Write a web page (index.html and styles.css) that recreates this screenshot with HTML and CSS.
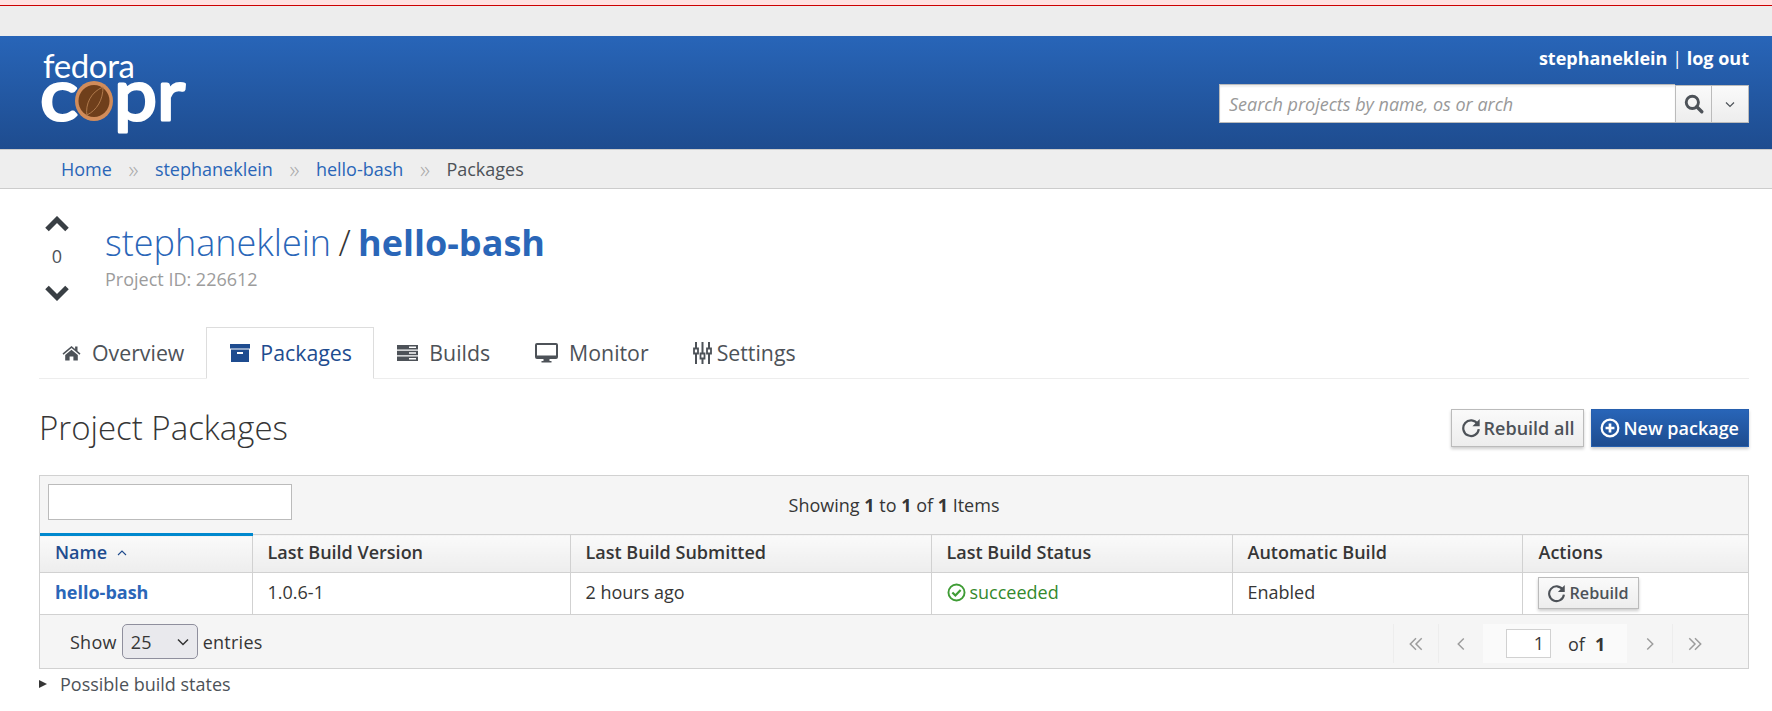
FILE: index.html
```html
<!DOCTYPE html>
<html lang="en">
<head>
<meta charset="utf-8">
<title>Project Packages</title>
<link rel="stylesheet" href="styles.css">
</head>
<body>
<div class="alert-strip"></div>
<div class="top-gap"></div>
<header class="masthead">
  <svg class="logo" viewBox="0 0 150 92" width="150" height="92">
    <text class="logo-fedora" x="3" y="27" textLength="92">fedora</text>
    <text class="logo-copr" x="0" y="69" textLength="38" lengthAdjust="spacingAndGlyphs">c</text>
    <text class="logo-copr" x="74" y="69" textLength="71" lengthAdjust="spacingAndGlyphs">pr</text>
    <ellipse cx="54" cy="50" rx="19" ry="20" fill="#d18c5a"/>
    <ellipse cx="54" cy="50" rx="15.5" ry="16" fill="#6f3f1b"/>
    <path d="M47 65C45 53 51 41 63 36M47 64C57 59 63 49 63 36" fill="none" stroke="#b07a4c" stroke-width="1"/>
  </svg>
  <div class="head-right">
    <div class="user"><a>stephaneklein</a> <span class="pipe">|</span> <a>log out</a></div>
    <div class="search">
      <input class="search-input" placeholder="Search projects by name, os or arch">
      <button class="search-btn"><svg width="20" height="20" viewBox="0 0 18 18"><circle cx="7.5" cy="7.5" r="5.5" fill="none" stroke="#4d5258" stroke-width="2.6"/><path d="M11.5 11.5L16 16" stroke="#4d5258" stroke-width="3" stroke-linecap="round"/></svg></button>
      <button class="search-drop"><svg width="10" height="7" viewBox="0 0 10 7"><path d="M1 1.5L5 5.5L9 1.5" fill="none" stroke="#4d5258" stroke-width="1.2"/></svg></button>
    </div>
  </div>
</header>
<nav class="crumbs">
  <a>Home</a><span class="sep">»</span><a>stephaneklein</a><span class="sep">»</span><a>hello-bash</a><span class="sep">»</span><span class="cur">Packages</span>
</nav>
<main class="content">
  <section class="project">
    <div class="votes">
      <svg width="26" height="16" viewBox="0 0 26 16"><path d="M3 13.500L13 3.500L23 13.500" fill="none" stroke="#393f44" stroke-width="5"/></svg>
      <span class="vote-num">0</span>
      <svg width="26" height="16" viewBox="0 0 26 16"><path d="M3 2.500L13 12.500L23 2.500" fill="none" stroke="#393f44" stroke-width="5"/></svg>
    </div>
    <div class="titles">
      <h1 class="title"><a class="owner">stephaneklein</a> <span class="slash">/</span> <a class="pname">hello-bash</a></h1>
      <div class="pid">Project ID: 226612</div>
    </div>
  </section>
  <ul class="tabs">
    <li class="tab"><svg class="ti" width="19" height="16" viewBox="0 0 19 16"><path fill="currentColor" d="M9.5 1L0.5 8.6l1 1.1L9.5 3l8 6.7 1-1.1L15.5 6V1.6h-2.4v2.3zM3.200 10v5.500h4.400v-4h3.800v4h4.400V10L9.500 4.800z"/></svg>Overview</li>
    <li class="tab active"><svg class="ti" width="20" height="18" viewBox="0 0 20 18"><path fill="currentColor" d="M0 0h20v4.500H0zM1 5.500h18V18H1zM7 8v2h6V8z" fill-rule="evenodd"/></svg>Packages</li>
    <li class="tab"><svg class="ti" width="21" height="16" viewBox="0 0 21 16"><path fill="currentColor" fill-rule="evenodd" d="M0 0h21v4.500H0zM0 5.700h21v4.600H0zM0 11.500h21V16H0zM12 1.500v1.500h7V1.500zM12 7.200v1.500h7V7.200zM12 13v1.500h7V13z"/></svg>Builds</li>
    <li class="tab"><svg class="ti" width="23" height="20" viewBox="0 0 23 20"><path fill="currentColor" fill-rule="evenodd" d="M2 0h19a2 2 0 0 1 2 2v12a2 2 0 0 1-2 2h-6.500v2h2v1.500H6.500V18h2v-2H2a2 2 0 0 1-2-2V2a2 2 0 0 1 2-2zM2 2v10.500h19V2z"/></svg>Monitor</li>
    <li class="tab tab-tight"><svg class="ti" width="19" height="22" viewBox="0 0 19 22"><path fill="none" stroke="currentColor" stroke-width="2" d="M3 0v6M3 12v10M9.500 0v11M9.500 17v5M16 0v6M16 12v10"/><path fill="none" stroke="currentColor" stroke-width="1.800" d="M1 6.500h4v5H1zM7.500 11.500h4v5h-4zM14 6.500h4v5h-4z"/></svg>Settings</li>
  </ul>
  <div class="section-head">
    <h2 class="section-title">Project Packages</h2>
    <div class="section-actions">
      <button class="btn"><svg class="ri" width="20" height="20" viewBox="0 0 18 18"><path d="M15 5.500A7 7 0 1 0 16 10" fill="none" stroke="#4d5258" stroke-width="2"/><path d="M16.800 1v6.500h-6.500z" fill="#4d5258"/></svg>Rebuild all</button>
      <button class="btn btn-primary"><svg class="ri" width="20" height="20" viewBox="0 0 18 18"><circle cx="9" cy="9" r="7.500" fill="none" stroke="#fff" stroke-width="2"/><path d="M9 5v8M5 9h8" stroke="#fff" stroke-width="2.400"/></svg>New package</button>
    </div>
  </div>
  <div class="panel">
    <div class="panel-top">
      <input class="filter">
      <div class="showing">Showing <b>1</b> to <b>1</b> of <b>1</b> Items</div>
    </div>
    <table class="grid">
      <colgroup><col class="c1"><col class="c2"><col class="c3"><col class="c4"><col class="c5"><col class="c6"></colgroup>
      <thead>
        <tr>
          <th class="sorted">Name <svg class="caret" width="12" height="7" viewBox="0 0 12 7"><path d="M2 6L6 2L10 6" fill="none" stroke="#1d4a8c" stroke-width="1.100"/></svg></th>
          <th>Last Build Version</th>
          <th>Last Build Submitted</th>
          <th>Last Build Status</th>
          <th>Automatic Build</th>
          <th>Actions</th>
        </tr>
      </thead>
      <tbody>
        <tr>
          <td><a class="pkg">hello-bash</a></td>
          <td>1.0.6-1</td>
          <td>2 hours ago</td>
          <td class="ok"><svg class="oki" width="19" height="19" viewBox="0 0 17 17"><circle cx="8.500" cy="8.500" r="7.200" fill="none" stroke="#3f9c35" stroke-width="1.700"/><path d="M4.800 8.500L7.500 11.200L12.200 6.300" fill="none" stroke="#3f9c35" stroke-width="2"/></svg>succeeded</td>
          <td>Enabled</td>
          <td class="act"><button class="btn btn-small"><svg class="ri-s" width="19" height="19" viewBox="0 0 18 18"><path d="M15 5.500A7 7 0 1 0 16 10" fill="none" stroke="#4d5258" stroke-width="2"/><path d="M16.800 1v6.500h-6.500z" fill="#4d5258"/></svg>Rebuild</button></td>
        </tr>
      </tbody>
    </table>
    <div class="panel-foot">
      <div class="entries">Show <span class="select">25<svg width="12" height="8" viewBox="0 0 12 8"><path d="M1 1.500L6 6.500L11 1.500" fill="none" stroke="#333" stroke-width="1.500"/></svg></span> entries</div>
      <div class="pager">
        <span class="pg"><svg width="16" height="16" viewBox="0 0 14 14"><path d="M7 2L2 7L7 12M12 2L7 7L12 12" fill="none" stroke="#9c9c9c" stroke-width="1.300"/></svg></span>
        <span class="pg"><svg width="10" height="16" viewBox="0 0 9 14"><path d="M7 2L2 7L7 12" fill="none" stroke="#9c9c9c" stroke-width="1.300"/></svg></span>
        <span class="pg-current"><span class="pg-input">1</span><span class="of">of</span><b>1</b></span>
        <span class="pg pg-next"><svg width="10" height="16" viewBox="0 0 9 14"><path d="M2 2L7 7L2 12" fill="none" stroke="#9c9c9c" stroke-width="1.300"/></svg></span>
        <span class="pg"><svg width="16" height="16" viewBox="0 0 14 14"><path d="M2 2L7 7L2 12M7 2L12 7L7 12" fill="none" stroke="#9c9c9c" stroke-width="1.300"/></svg></span>
      </div>
    </div>
  </div>
  <details class="states"><summary>Possible build states</summary></details>
</main>
</body>
</html>
```
FILE: styles.css
```css
* { box-sizing: border-box; }
html, body { margin: 0; padding: 0; }
body { font-family: "Open Sans", sans-serif; font-size: 18px; color: #363636; background: #fff; overflow: hidden; }
a { color: #2a66b8; text-decoration: none; }

.alert-strip { height: 6px; background: #ffe1e1; border-bottom: 1px solid #c00; }
.top-gap { height: 30px; background: #ededed; }

.masthead { height: 113px; background: linear-gradient(#2865b8, #1e4c8f); display: flex; justify-content: space-between; padding: 0 23px 0 40px; }
.logo { margin-top: 15px; display: block; overflow: visible; }
.logo-fedora { font-family: "Lato", sans-serif; font-size: 33px; font-weight: 400; fill: #fff; }
.logo-copr { font-family: "Lato", sans-serif; font-size: 72px; font-weight: 400; fill: #fff; stroke: #fff; stroke-width: 3; stroke-linejoin: round; }
.head-right { display: flex; flex-direction: column; align-items: flex-end; padding-top: 10px; }
.user { color: #fff; font-weight: 700; font-size: 18px; line-height: 24px; height: 38px; }
.user a { color: #fff; }
.pipe { font-weight: 400; }
.search { display: flex; height: 39px; }
.search-input { width: 456px; height: 39px; border: 1px solid #bbb; border-right: 0; padding: 0 9px; font: italic 18px "Open Sans", sans-serif; background: #fff; box-shadow: inset 0 2px 2px #eee; }
.search-input::placeholder { color: #999; opacity: 1; }
.search-btn, .search-drop { height: 38px; margin-top: 1px; border: 1px solid #bbb; background: linear-gradient(#fafafa, #ededed); padding: 0; display: flex; align-items: center; justify-content: center; }
.search-btn { width: 37px; }
.search-drop { width: 37px; border-left: 0; }

.crumbs { height: 40px; background: #eee; border-top: 1px solid #ccc; border-bottom: 1px solid #ccc; padding-left: 61px; display: flex; align-items: center; font-size: 18px; }
.sep { color: #aaa; width: 43px; text-align: center; font-size: 23px; font-weight: 300; line-height: 24px; }
.cur { color: #4d5258; }

.content { padding: 0 23px 0 39px; }
.project { display: flex; height: 138px; }
.votes { width: 36px; padding-top: 27px; display: flex; flex-direction: column; align-items: center; }
.vote-num { font-size: 18px; color: #4d5258; line-height: 24px; margin: 12px 0 17px; }
.titles { margin-left: 30px; padding-top: 29px; }
.title { margin: 0; font-size: 36px; font-weight: 300; line-height: 50px; color: #363636; }
.owner { font-weight: 300; }
.slash { margin: 0 -2px; }
.pname { font-weight: 700; }
.pid { color: #9c9c9c; font-size: 18px; line-height: 24px; margin-top: -1px; }

.tabs { list-style: none; margin: 0; padding: 0; height: 52px; display: flex; border-bottom: 1px solid #ededed; font-size: 21.300px; color: #4d5258; }
.tab { height: 51px; padding: 0 22px 0 23px; display: flex; align-items: center; }
.tab.active { width: 168px; height: 52px; padding-bottom: 1px; color: #1e4c8f; background: #fff; border: 1px solid #ddd; border-bottom-color: #fff; }
.ti { margin-right: 11px; flex: none; }
.tab.active .ti { margin-right: 10px; }
.tab-tight { margin-left: -1px; }
.tab-tight .ti { margin-right: 5px; }

.section-head { display: flex; justify-content: space-between; align-items: flex-start; height: 96px; padding-top: 30px; }
.section-title { margin: -1px 0 0; font-size: 33px; font-weight: 300; line-height: 40px; color: #363636; }
.section-actions { display: flex; gap: 7px; }
.btn { font: 600 18px "Open Sans", sans-serif; color: #4d5258; height: 38px; padding: 0 9px; border: 1px solid #bbb; background: linear-gradient(#fafafa, #ededed); box-shadow: 0 2px 3px rgba(0,0,0,.2); display: flex; align-items: center; }
.btn-primary { color: #fff; background: linear-gradient(#2865b8, #1e4c8f); border-color: #265fae; padding-left: 8px; }
.ri { margin-right: 3px; }
.ri-s { margin-right: 4px; }
.btn-small { height: 32px; font-size: 16.200px; padding: 0 9px 0 8px; margin-top: -1px; }

.panel { width: 1710px; border: 1px solid #d1d1d1; background: #f5f5f5; }
.panel-top { height: 57px; position: relative; display: flex; align-items: center; justify-content: center; }
.filter { position: absolute; left: 8px; top: 8px; width: 244px; height: 36px; border: 1px solid #bbb; background: #fff; }
.showing { font-size: 18px; color: #363636; padding-top: 1px; }
.showing b { font-weight: 700; }

.grid { width: 100%; table-layout: fixed; border-collapse: collapse; font-size: 18px; }
.c1 { width: 212px; } .c2 { width: 318px; } .c3 { width: 361px; } .c4 { width: 301px; } .c5 { width: 290px; } .c6 { width: auto; }
.grid th, .grid td { border: 1px solid #d1d1d1; padding: 0 15px 4px; text-align: left; }
.grid th { height: 38px; font-weight: 600; color: #363636; background: linear-gradient(#fafafa, #ededed); }
.grid th:first-child, .grid td:first-child { border-left: 0; }
.grid th:last-child, .grid td:last-child { border-right: 0; padding-left: 16px; }
.grid th.sorted { color: #1e4c8f; border-top: 3px solid #0088ce; }
.caret { margin-left: 4px; vertical-align: 3px; }
.grid td { height: 42px; background: #fff; color: #363636; }
.pkg { font-weight: 700; }
.grid td.ok { color: #34892c; }
.oki { margin-right: 4px; vertical-align: -3px; }
.grid td.act { padding: 0 0 0 15px; }

.panel-foot { height: 53px; padding-top: 9px; display: flex; justify-content: space-between; align-items: flex-start; }
.entries { padding-left: 30px; height: 35px; display: flex; align-items: center; gap: 5px; font-size: 18px; letter-spacing: .25px; }
.select { width: 76px; height: 35px; border: 1px solid #8f8f9d; border-radius: 5px; background: #e9e9ed; padding: 0 8px; display: flex; align-items: center; justify-content: space-between; }
.pager { display: flex; height: 39px; margin-right: 31px; }
.pg { width: 45px; border-left: 1px solid #ededed; display: flex; align-items: center; justify-content: center; }
.pg-next { border-left: 0; }
.pg-current { width: 144px; background: #fafafa; display: flex; align-items: center; padding-left: 23px; }
.pg-input { width: 45px; height: 29px; border: 1px solid #d1d1d1; background: #fff; text-align: right; padding-right: 6px; line-height: 27px; }
.of { margin: 0 10px 0 17px; }

.states { margin-top: 3px; font-size: 18px; color: #4d5258; }
.states summary { line-height: 24px; list-style: none; display: flex; align-items: center; }
.states summary::before { content: ""; width: 0; height: 0; border-left: 8px solid #363636; border-top: 4.500px solid transparent; border-bottom: 4.500px solid transparent; margin-right: 13px; }
```
